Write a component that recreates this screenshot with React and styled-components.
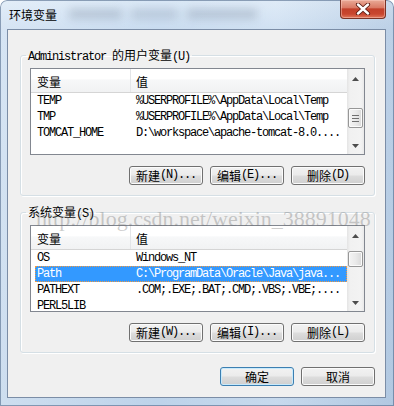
import React from "react";
import styled, { createGlobalStyle, css } from "styled-components";

const CJK = `"Noto Sans CJK SC", "Liberation Sans", sans-serif`;
const MONO = `"Liberation Mono", "DejaVu Sans Mono", monospace`;

const GlobalStyle = createGlobalStyle`
  html, body { margin: 0; padding: 0; background: #ffffff; }
  body { font-family: ${CJK}; font-size: 12px; color: #000; }
  * { box-sizing: border-box; }
`;

const Window = styled.div`
  position: relative;
  width: 394px;
  height: 406px;
  display: flex;
  flex-direction: column;
  padding: 0 8px 8px 7px;
  border-radius: 7px 7px 0 0;
  overflow: hidden;
  background:
    linear-gradient(90deg, rgba(255,255,255,0.25) 0%, rgba(255,255,255,0) 40%, rgba(255,255,255,0.15) 70%, rgba(90,120,160,0.12) 100%),
    linear-gradient(180deg, #dae8f6 0px, #c9dcf0 29px, #bdd3ea 100%);
  box-shadow: inset 0 0 0 1px rgba(70, 95, 130, 0.55);
`;

const TitleBar = styled.div`
  flex: none;
  height: 29px;
  display: flex;
  align-items: flex-start;
`;

const Title = styled.span`
  margin: 7px 0 0 2px;
  font-family: ${CJK};
  font-size: 12px;
  line-height: 16px;
  color: #000;
`;

const TitleBlur = styled.span`
  margin: 9px 0 0 12px;
  width: 188px;
  height: 10px;
  filter: blur(4px);
  background: linear-gradient(90deg,
    rgba(60, 75, 100, 0.2) 0 28%, transparent 28% 33%,
    rgba(60, 75, 100, 0.16) 33% 58%, transparent 58% 63%,
    rgba(60, 75, 100, 0.2) 63% 100%);
`;

const CloseButton = styled.div`
  margin-left: auto;
  width: 46px;
  height: 19px;
  border: 1px solid #7a3326;
  border-top: none;
  border-radius: 0 0 4px 4px;
  display: flex;
  align-items: center;
  justify-content: center;
  background: linear-gradient(180deg, #e9aa97 0%, #da7b66 42%, #c2402a 50%, #c9472f 78%, #e0785c 100%);
  box-shadow: inset 0 0 0 1px rgba(255, 210, 200, 0.45);
`;

const Client = styled.div`
  flex: 1;
  display: flex;
  flex-direction: column;
  padding: 0 10px 0 12px;
  background: #f0f0f0;
  border: 1px solid #7b8da6;
`;

const Group = styled.fieldset`
  margin: ${(p) => p.$top}px 0 0 0;
  padding: 6px 9px 10px 9px;
  border: 1px solid #d5dfe5;
  border-radius: 3px;
  box-shadow: inset 1px 1px 0 #ffffff, 1px 1px 0 #ffffff;
  min-width: 0;
`;

const Legend = styled.legend`
  margin-left: -4px;
  padding: 0 2px;
  height: 14px;
  font-family: ${CJK};
  font-size: 12px;
  line-height: 14px;
  color: #000;
`;

const Mono = styled.span`
  font-family: ${MONO};
  font-size: 12px;
  letter-spacing: -1.2px;
`;

const List = styled.div`
  height: 87px;
  display: flex;
  border: 1px solid #828790;
  background: #ffffff;
  overflow: hidden;
`;

const ListBody = styled.div`
  flex: 1;
  min-width: 0;
  display: flex;
  flex-direction: column;
  overflow: hidden;
`;

const Header = styled.div`
  flex: none;
  height: 24px;
  display: grid;
  grid-template-columns: 100px 1fr;
  border-bottom: 1px solid #d5d5d5;
  background: linear-gradient(180deg, #ffffff 0%, #ffffff 45%, #f7f8f9 46%, #f1f2f3 100%);
`;

const HeaderCell = styled.div`
  display: flex;
  align-items: center;
  padding: 2px 0 0 ${(p) => p.$pad}px;
  font-family: ${CJK};
  font-size: 12px;
  color: #000;
  ${(p) => p.$divider && css`border-right: 1px solid #e3e5e8;`}
`;

const Row = styled.div`
  flex: none;
  height: 16px;
  margin-left: 4px;
  display: grid;
  grid-template-columns: 95px 1fr;
  align-items: center;
  color: #000;
  ${(p) =>
    p.$selected &&
    css`
      background: #3399ff;
      color: #ffffff;
      outline: 1px dotted #f39a3f;
      outline-offset: -1px;
    `}
`;

const Cell = styled.span`
  padding-left: ${(p) => p.$pad}px;
  font-family: ${MONO};
  font-size: 12px;
  letter-spacing: -1.2px;
  line-height: 16px;
  white-space: nowrap;
  overflow: hidden;
`;

const Scrollbar = styled.div`
  flex: none;
  width: 17px;
  display: flex;
  flex-direction: column;
  background: linear-gradient(90deg, #e4e4e4 0px, #f1f1f1 3px, #f3f3f3 14px, #e9e9e9 17px);
`;

const ScrollArrow = styled.div`
  flex: none;
  height: 17px;
  display: flex;
  align-items: center;
  justify-content: center;
  padding-top: ${(p) => (p.$down ? 0 : 2)}px;
`;

const Track = styled.div`
  flex: 1;
  display: flex;
  flex-direction: column;
`;

const Thumb = styled.div`
  margin: ${(p) => p.$top}px 1px 0 1px;
  height: ${(p) => p.$height}px;
  border: 1px solid #979797;
  border-radius: 2px;
  background: linear-gradient(90deg, #f4f4f4 0%, #eaeaea 50%, #d9d9d9 100%);
  box-shadow: inset 0 0 0 1px #fbfbfb;
  display: flex;
  align-items: center;
  justify-content: center;
`;

const ButtonRow = styled.div`
  display: flex;
  justify-content: flex-end;
  gap: 7px;
  margin-top: ${(p) => p.$top}px;
`;

const Button = styled.div`
  width: 74px;
  height: 19px;
  display: flex;
  align-items: center;
  justify-content: center;
  border: 1px solid ${(p) => (p.$default ? "#3c7fb1" : "#707070")};
  border-radius: 3px;
  background: linear-gradient(180deg, #f2f2f2 0%, #ebebeb 48%, #dddddd 52%, #cfcfcf 100%);
  box-shadow: inset 0 0 0 1px ${(p) => (p.$default ? "#c8eafc" : "#fbfbfb")};
  font-family: ${CJK};
  font-size: 12px;
  line-height: 17px;
  color: #000;
  white-space: nowrap;
`;

const Watermark = styled.div`
  position: absolute;
  left: 36px;
  top: 208px;
  font-family: "Liberation Serif", serif;
  font-size: 22px;
  line-height: 22px;
  color: rgba(110, 110, 110, 0.35);
  white-space: nowrap;
  pointer-events: none;
`;

const UpGlyph = () => (
  <svg width="7" height="4" viewBox="0 0 7 4">
    <path d="M0 4 L3.5 0 L7 4 Z" fill="#4d4d4d" />
  </svg>
);
const DownGlyph = () => (
  <svg width="7" height="4" viewBox="0 0 7 4">
    <path d="M0 0 L7 0 L3.5 4 Z" fill="#4d4d4d" />
  </svg>
);

const Grip = () => (
  <svg width="7" height="7" viewBox="0 0 7 7">
    <path d="M0 0.5H7M0 3.5H7M0 6.5H7" stroke="#6f6f6f" strokeWidth="1" />
  </svg>
);

const CloseGlyph = () => (
  <svg width="16" height="12" viewBox="0 0 16 12">
    <path d="M3 1.5 L13 10.5 M13 1.5 L3 10.5" stroke="#5a1c12" strokeWidth="4.2" strokeLinecap="round" />
    <path d="M3 1.5 L13 10.5 M13 1.5 L3 10.5" stroke="#ffffff" strokeWidth="2.4" strokeLinecap="round" />
  </svg>
);

function VarList({ rows, thumbTop, thumbHeight, grip }) {
  return (
    <List>
      <ListBody>
        <Header>
          <HeaderCell $pad={6} $divider>变量</HeaderCell>
          <HeaderCell $pad={5}>值</HeaderCell>
        </Header>
        {rows.map((r) => (
          <Row key={r.name} $selected={r.selected}>
            <Cell $pad={2}>{r.name}</Cell>
            <Cell $pad={6}>{r.value}</Cell>
          </Row>
        ))}
      </ListBody>
      <Scrollbar>
        <ScrollArrow>
          <UpGlyph />
        </ScrollArrow>
        <Track>
          <Thumb $top={thumbTop} $height={thumbHeight}>
            {grip && <Grip />}
          </Thumb>
        </Track>
        <ScrollArrow $down>
          <DownGlyph />
        </ScrollArrow>
      </Scrollbar>
    </List>
  );
}

const userRows = [
  { name: "TEMP", value: "%USERPROFILE%\\AppData\\Local\\Temp" },
  { name: "TMP", value: "%USERPROFILE%\\AppData\\Local\\Temp" },
  { name: "TOMCAT_HOME", value: "D:\\workspace\\apache-tomcat-8.0...." },
];

const systemRows = [
  { name: "OS", value: "Windows_NT" },
  { name: "Path", value: "C:\\ProgramData\\Oracle\\Java\\java...", selected: true },
  { name: "PATHEXT", value: ".COM;.EXE;.BAT;.CMD;.VBS;.VBE;...." },
  { name: "PERL5LIB", value: "" },
];

function ActionButton({ label, keyHint }) {
  return (
    <Button>
      {label}
      <Mono>({keyHint})...</Mono>
    </Button>
  );
}

export default function App() {
  return (
    <>
      <GlobalStyle />
      <Window>
        <TitleBar>
          <Title>环境变量</Title>
          <TitleBlur />
          <CloseButton>
            <CloseGlyph />
          </CloseButton>
        </TitleBar>
        <Client>
          <Group $top={18}>
            <Legend>
              <Mono>Administrator </Mono>的用户变量<Mono>(U)</Mono>
            </Legend>
            <VarList rows={userRows} thumbTop={22} thumbHeight={20} grip />
            <ButtonRow $top={11}>
              <ActionButton label="新建" keyHint="N" />
              <ActionButton label="编辑" keyHint="E" />
              <Button>
                删除<Mono>(D)</Mono>
              </Button>
            </ButtonRow>
          </Group>
          <Group $top={9}>
            <Legend>
              系统变量<Mono>(S)</Mono>
            </Legend>
            <VarList rows={systemRows} thumbTop={8} thumbHeight={16} />
            <ButtonRow $top={11}>
              <ActionButton label="新建" keyHint="W" />
              <ActionButton label="编辑" keyHint="I" />
              <Button>
                删除<Mono>(L)</Mono>
              </Button>
            </ButtonRow>
          </Group>
          <ButtonRow $top={14}>
            <Button $default>确定</Button>
            <Button>取消</Button>
          </ButtonRow>
        </Client>
        <Watermark>http://blog.csdn.net/weixin_38891048</Watermark>
      </Window>
    </>
  );
}
